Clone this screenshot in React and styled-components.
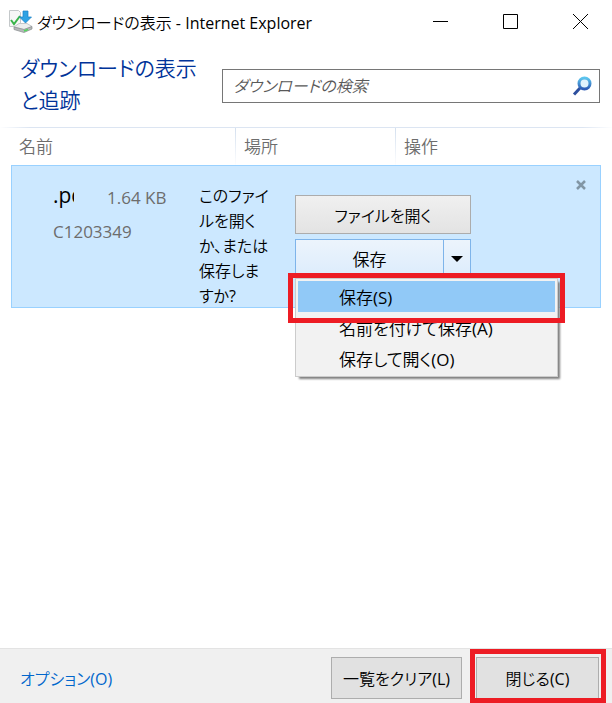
import styled, { createGlobalStyle } from "styled-components";

const GlobalStyle = createGlobalStyle`
    * {
        box-sizing: border-box;
    }
    body {
        margin: 0;
        background: #ffffff;
    }
    body, button, input {
        font-family: "Open Sans", "Noto Sans CJK JP DemiLight", "Noto Sans CJK JP", sans-serif;
        font-size: 17px;
        font-weight: 400;
        font-feature-settings: "palt";
    }
    button {
        color: #000000;
    }
`

const Window = styled.div`
    display: flex;
    flex-direction: column;
    min-height: 100vh;
    color: #000000;
`

const TitleBar = styled.header`
    display: flex;
    align-items: center;
    height: 43px;
    padding-left: 8px;
`

const Title = styled.h1`
    flex: 1;
    margin: 0 0 0 4px;
    font-size: 16px;
    font-weight: 400;
    white-space: nowrap;
`

const WindowButton = styled.button`
    display: flex;
    align-items: center;
    justify-content: center;
    width: 70px;
    height: 43px;
    padding: 0;
    border: 0;
    background: transparent;
`

const WindowButtons = styled.div`
    display: flex;
    margin-right: -4px;
`

const Heading = styled.section`
    display: flex;
    justify-content: space-between;
    height: 84px;
    padding: 9px 12px 0 20px;
`

const HeadingText = styled.h2`
    width: 202px;
    margin: 0;
    flex-shrink: 0;
    font-size: 21px;
    font-weight: 350;
    line-height: 32px;
    color: #003399;
`

const SearchBox = styled.form`
    display: flex;
    flex: 1;
    height: 34px;
    margin-top: 17px;
    border: 1px solid #767676;
`

const SearchInput = styled.input`
    flex: 1;
    min-width: 0;
    padding: 0 10px;
    border: 0;
    outline: 0;
    font-size: 16px;
    font-weight: 350;
    &::placeholder {
        color: #595959;
        font-style: italic;
        opacity: 1;
    }
`

const SearchButton = styled.button`
    width: 34px;
    padding: 0;
    border: 0;
    background: transparent;
    svg {
        display: block;
        margin: 0 auto;
    }
`

const ColumnHeader = styled.div`
    display: grid;
    grid-template-columns: 235px 160px 1fr;
    height: 38px;
    border-top: 1px solid;
    border-image: linear-gradient(to right, #ffffff, #dce5f2 5%, #dce5f2 95%, #ffffff) 1;
`

const ColumnName = styled.div`
    padding-left: ${(props) => (props.$first ? "19px" : "8px")};
    border-left: ${(props) => (props.$first ? "0" : "1px solid")};
    border-image: linear-gradient(to bottom, #d3dfee, #ffffff) 1;
    font-weight: 350;
    line-height: 38px;
    color: #6d6d6d;
`

const DownloadRow = styled.article`
    display: grid;
    grid-template-columns: 146px 96px 176px 1fr;
    height: 143px;
    margin: 0 11px;
    padding-left: 41px;
    border: 1px solid #99d1ff;
    background: #cce8ff;
`

const FileInfo = styled.div`
    padding-top: 14px;
    color: #6d6d6d;
`

const FileLine = styled.div`
    display: flex;
    align-items: center;
    height: 34px;
`

const FileName = styled.span`
    width: 21px;
    margin-right: 33px;
    overflow: hidden;
    font-size: 21px;
    line-height: 28px;
    padding-bottom: 4px;
    color: #000000;
`

const FileText = styled.span`
    white-space: nowrap;
`

const Message = styled.p`
    margin: 0;
    padding-top: 18px;
    font-size: 16px;
    line-height: 25px;
    white-space: nowrap;
`

const Actions = styled.div`
    display: flex;
    flex-direction: column;
    gap: 5px;
    padding-top: 29px;
`

const OpenButton = styled.button`
    height: 39px;
    border: 1px solid #acacac;
    background: linear-gradient(#f0f0f0, #e3e3e3);
    font-size: 16px;
`

const SplitButton = styled.div`
    position: relative;
    display: flex;
    height: 39px;
    border: 1px solid #7eb4ea;
    background: linear-gradient(#ecf4fc, #dcecfc);
`

const SaveButton = styled.button`
    flex: 1;
    padding: 0;
    border: 0;
    background: transparent;
`

const ArrowButton = styled.button`
    width: 27px;
    padding: 0;
    border: 0;
    border-left: 1px solid #7eb4ea;
    background: transparent;
    svg {
        display: block;
        margin: 0 auto;
    }
`

const Menu = styled.div`
    position: absolute;
    top: 38px;
    left: -1px;
    width: 263px;
    padding: 2px;
    border: 1px solid #cccccc;
    background: #f2f2f2;
    box-shadow: 3px 3px 2px -1px #808080;
`

const MenuItem = styled.button`
    display: block;
    width: 100%;
    height: 31px;
    padding: 0 0 0 41px;
    border: 0;
    background: ${(props) => (props.$active ? "#91c9f7" : "transparent")};
    text-align: left;
    white-space: nowrap;
`

const Marked = styled.div`
    position: relative;
    &::after {
        content: "";
        position: absolute;
        inset: ${(props) => props.$inset};
        border: 5px solid #ed1c24;
        pointer-events: none;
    }
`

const DismissButton = styled.button`
    justify-self: end;
    align-self: start;
    margin-top: 9px;
    padding: 5px 14px;
    border: 0;
    background: transparent;
    svg {
        display: block;
    }
`

const Footer = styled.footer`
    display: flex;
    align-items: center;
    gap: 14px;
    height: 55px;
    margin-top: auto;
    padding: 4px 13px 0 20px;
    border-top: 1px solid #e3e3e3;
    background: #f0f0f0;
`

const OptionsLink = styled.a`
    margin-right: auto;
    font-size: 16px;
    color: #0066cc;
    text-decoration: none;
`

const FooterButton = styled.button`
    display: block;
    width: ${(props) => props.$width};
    height: 42px;
    padding: 0;
    border: 1px solid #adadad;
    background: #e1e1e1;
    font-size: 16px;
    white-space: nowrap;
`

function DownloadIcon() {
    return (
        <svg width="25" height="25" viewBox="0 0 25 25">
            <path d="M1.500 1.500h9l2 2v14h-11z" fill="#f7f7f7" stroke="#c4c8ca" />
            <path d="M3 11l3 4 6-8" fill="none" stroke="#39b54a" strokeWidth="2" />
            <path d="M6 18l5-3.500h8l5 3-8 3z" fill="#eceeee" stroke="#c4c8ca" />
            <path d="M6 18l10 2.500 8-3v2.500l-8 3.500-10-3z" fill="#b5b9ba" stroke="#888c8e" strokeWidth=".7" />
            <path d="M16 22l4-1.500" stroke="#50d85a" strokeWidth="1.500" />
            <path d="M15 2h5v6h3.500l-6 6-6-6H15z" fill="#2da2e4" stroke="#1980c7" strokeWidth=".7" />
        </svg>
    )
}

function SearchIcon() {
    return (
        <svg width="20" height="20" viewBox="0 0 20 20">
            <defs>
                <linearGradient id="lens" x1="0" y1="0" x2="0" y2="1">
                    <stop offset="0" stopColor="#5cc5ee" />
                    <stop offset="1" stopColor="#2f5cb5" />
                </linearGradient>
            </defs>
            <path d="M8.500 11.500L2 18.500" stroke="#2d4f9e" strokeWidth="3" />
            <circle cx="12.500" cy="7.500" r="5.500" fill="#e2f3fc" stroke="url(#lens)" strokeWidth="3" />
        </svg>
    )
}

export default function App() {
    return (
        <Window>
            <GlobalStyle />
            <TitleBar>
                <DownloadIcon />
                <Title>ダウンロードの表示 - Internet Explorer</Title>
                <WindowButtons>
                    <WindowButton aria-label="最小化">
                        <svg width="16" height="16"><path d="M0 7.500h15" stroke="#000" /></svg>
                    </WindowButton>
                    <WindowButton aria-label="最大化">
                        <svg width="16" height="16"><path d="M.5.5h14v14H.5z" fill="none" stroke="#000" /></svg>
                    </WindowButton>
                    <WindowButton aria-label="ウィンドウを閉じる">
                        <svg width="16" height="16"><path d="M0 0l15 15M15 0L0 15" stroke="#000" /></svg>
                    </WindowButton>
                </WindowButtons>
            </TitleBar>
            <Heading>
                <HeadingText>ダウンロードの表示<br />と追跡</HeadingText>
                <SearchBox>
                    <SearchInput type="text" aria-label="ダウンロードの検索" placeholder="ダウンロードの検索" />
                    <SearchButton type="button" aria-label="検索"><SearchIcon /></SearchButton>
                </SearchBox>
            </Heading>
            <ColumnHeader>
                <ColumnName $first>名前</ColumnName>
                <ColumnName>場所</ColumnName>
                <ColumnName>操作</ColumnName>
            </ColumnHeader>
            <DownloadRow>
                <FileInfo>
                    <FileLine>
                        <FileName>.pdf</FileName>
                        <FileText>1.64 KB</FileText>
                    </FileLine>
                    <FileLine>
                        <FileText>C1203349</FileText>
                    </FileLine>
                </FileInfo>
                <Message>このファイ<br />ルを開く<br />か、または<br />保存しま<br />すか?</Message>
                <Actions>
                    <OpenButton>ファイルを開く</OpenButton>
                    <SplitButton>
                        <SaveButton>保存</SaveButton>
                        <ArrowButton aria-label="保存オプション">
                            <svg width="12" height="6"><path d="M0 0h12L6 6z" /></svg>
                        </ArrowButton>
                        <Menu role="menu">
                            <Marked $inset="-8px -10px -11px">
                                <MenuItem role="menuitem" $active>保存(S)</MenuItem>
                            </Marked>
                            <MenuItem role="menuitem">名前を付けて保存(A)</MenuItem>
                            <MenuItem role="menuitem">保存して開く(O)</MenuItem>
                        </Menu>
                    </SplitButton>
                </Actions>
                <DismissButton aria-label="削除">
                    <svg width="10" height="10"><path d="M1 1l8 8M9 1L1 9" stroke="#8296a5" strokeWidth="2.500" /></svg>
                </DismissButton>
            </DownloadRow>
            <Footer>
                <OptionsLink href="#options">オプション(O)</OptionsLink>
                <FooterButton $width="131px">一覧をクリア(L)</FooterButton>
                <Marked $inset="-8px -7px -4px -6px">
                    <FooterButton $width="123px">閉じる(C)</FooterButton>
                </Marked>
            </Footer>
        </Window>
    )
}
